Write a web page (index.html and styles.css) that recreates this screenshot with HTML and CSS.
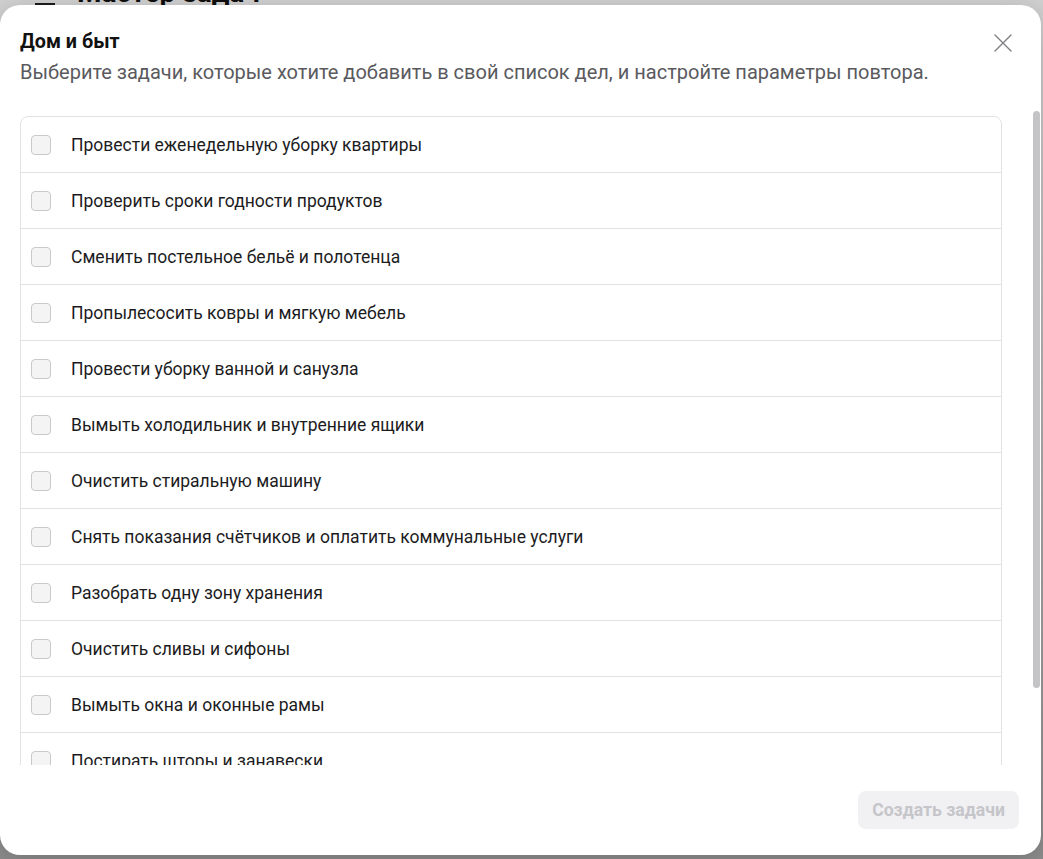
FILE: index.html
```html
<!DOCTYPE html>
<html lang="ru">
<head>
<meta charset="utf-8">
<title>Дом и быт</title>
<link rel="stylesheet" href="styles.css">
</head>
<body>
<div class="page">
  <div class="page-head">
    <span class="page-icon"></span>
    <h1 class="page-title">Мастер задач</h1>
  </div>
</div>
<div class="overlay"></div>
<div class="modal" role="dialog">
  <div class="modal-head">
    <div class="head-text">
      <h2 class="title">Дом и быт</h2>
      <p class="subtitle">Выберите задачи, которые хотите добавить в свой список дел, и настройте параметры повтора.</p>
    </div>
    <button class="close" aria-label="Закрыть">
      <svg width="18" height="18" viewBox="0 0 18 18"><path d="M1 1L17 17M17 1L1 17" stroke="#808084" stroke-width="1.4" fill="none" stroke-linecap="round"/></svg>
    </button>
  </div>
  <div class="modal-body">
    <ul class="task-list">
      <li class="task"><span class="box"></span><span class="label">Провести еженедельную уборку квартиры</span></li>
      <li class="task"><span class="box"></span><span class="label">Проверить сроки годности продуктов</span></li>
      <li class="task"><span class="box"></span><span class="label">Сменить постельное бельё и полотенца</span></li>
      <li class="task"><span class="box"></span><span class="label">Пропылесосить ковры и мягкую мебель</span></li>
      <li class="task"><span class="box"></span><span class="label">Провести уборку ванной и санузла</span></li>
      <li class="task"><span class="box"></span><span class="label">Вымыть холодильник и внутренние ящики</span></li>
      <li class="task"><span class="box"></span><span class="label">Очистить стиральную машину</span></li>
      <li class="task"><span class="box"></span><span class="label">Снять показания счётчиков и оплатить коммунальные услуги</span></li>
      <li class="task"><span class="box"></span><span class="label">Разобрать одну зону хранения</span></li>
      <li class="task"><span class="box"></span><span class="label">Очистить сливы и сифоны</span></li>
      <li class="task"><span class="box"></span><span class="label">Вымыть окна и оконные рамы</span></li>
      <li class="task"><span class="box"></span><span class="label">Постирать шторы и занавески</span></li>
      <li class="task"><span class="box"></span><span class="label">Почистить вытяжку и плиту</span></li>
    </ul>
  </div>
  <div class="scroll-thumb"></div>
  <div class="modal-foot">
    <button class="create" disabled>Создать задачи</button>
  </div>
</div>
</body>
</html>
```

FILE: styles.css
```css
* { box-sizing: border-box; }
html, body { margin: 0; padding: 0; }
body {
  width: 1043px;
  height: 859px;
  overflow: hidden;
  font-family: Roboto, "Noto Sans", "Liberation Sans", sans-serif;
  background: #ffffff;
  position: relative;
}
.page-head {
  display: flex;
  align-items: center;
  gap: 22px;
  padding-left: 35px;
  margin-top: -22px;
  height: 30px;
}
.page-icon {
  width: 20px;
  height: 24px;
  border-bottom: 2px solid #222;
}
.page-title {
  margin: 0;
  font-size: 28px;
  font-weight: 700;
  color: #111;
  line-height: 30px;
}
.overlay {
  position: absolute;
  inset: 0;
  background: linear-gradient(180deg, rgba(0,0,0,0.18) 0%, rgba(0,0,0,0.45) 100%);
}
.modal {
  position: absolute;
  left: 0;
  top: 5px;
  width: 1041px;
  height: 850px;
  background: #fff;
  border-radius: 20px;
  box-shadow: 0 4px 24px rgba(0,0,0,0.18);
  display: flex;
  flex-direction: column;
  overflow: hidden;
}
.modal-head {
  display: flex;
  justify-content: space-between;
  align-items: flex-start;
  padding: 24px 29px 0 20px;
  height: 95px;
  flex: none;
}
.title {
  margin: 0;
  font-size: 19.8px;
  font-weight: 700;
  line-height: 26px;
  color: #111;
}
.subtitle {
  margin: 4px 0 0;
  font-size: 20px;
  line-height: 26px;
  color: #5a5a5e;
}
.close {
  border: 0;
  background: transparent;
  padding: 0;
  margin-top: 5px;
  width: 18px;
  height: 18px;
  display: flex;
}
.modal-body {
  height: 665px;
  flex: none;
  overflow: hidden;
  padding: 16px 39px 16px 20px;
}
.scroll-thumb {
  position: absolute;
  left: 1033px;
  top: 106px;
  width: 7px;
  height: 577px;
  border-radius: 4px;
  background: #c4c4c6;
}
.task-list {
  list-style: none;
  margin: 0;
  padding: 0;
  border: 1px solid #e2e2e4;
  border-radius: 8px;
}
.task {
  display: flex;
  align-items: center;
  gap: 20px;
  height: 56px;
  padding-left: 10px;
  border-top: 1px solid #e2e2e4;
}
.task:first-child { border-top: 0; height: 55px; }
.box {
  width: 20px;
  height: 20px;
  border: 1px solid #c9c9cc;
  border-radius: 4px;
  background: #f4f4f5;
  flex: none;
}
.label {
  font-size: 17.5px;
  color: #1c1c1e;
}
.modal-foot {
  flex: 1;
  display: flex;
  justify-content: flex-end;
  align-items: flex-start;
  padding: 26px 22px 0 0;
}
.create {
  width: 161px;
  height: 38px;
  border: 0;
  border-radius: 8px;
  background: #f1f1f3;
  color: #c5c5ca;
  font-family: Roboto, "Noto Sans", "Liberation Sans", sans-serif;
  font-size: 17.6px;
  font-weight: 700;
}
```
